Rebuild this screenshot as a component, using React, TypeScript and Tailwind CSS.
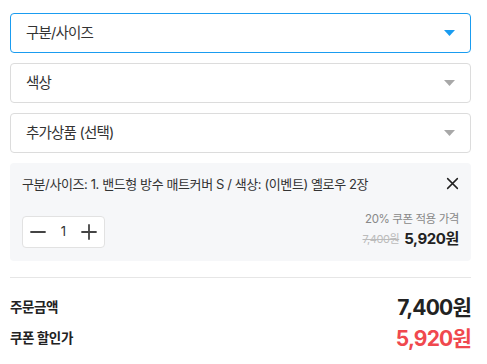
const selects = [
  { label: "구분/사이즈", active: true },
  { label: "색상", active: false },
  { label: "추가상품 (선택)", active: false },
];

function Caret({ active }: { active: boolean }) {
  return (
    <svg width="11" height="6" viewBox="0 0 11 6" className={active ? "fill-[#1a9cf0]" : "fill-[#a8a8a8]"}>
      <path d="M0 0h11L5.5 6z" />
    </svg>
  );
}

function Line({ d, size }: { d: string; size: number }) {
  return (
    <svg width={size} height={size} viewBox="0 0 16 16" fill="none" stroke="currentColor" strokeWidth="1.8" strokeLinecap="round">
      <path d={d} />
    </svg>
  );
}

export default function App() {
  return (
    <div className="w-[487px] bg-white pl-[10px] pr-[16px] pt-[13px] font-['Inter','Noto_Sans_CJK_KR',sans-serif] text-[#222]">
      <div className="flex flex-col gap-[10px]">
        {selects.map((s) => (
          <div
            key={s.label}
            className={
              "flex h-[40px] items-center justify-between rounded-[4px] border pl-[15px] pr-[15px] text-[14.5px] tracking-[-0.8px] " +
              (s.active ? "border-[#1a9cf0]" : "border-[#dcdcdc]")
            }
          >
            <span className="text-[#333]">{s.label}</span>
            <Caret active={s.active} />
          </div>
        ))}
      </div>

      <div className="mt-[10px] rounded-[4px] bg-[#f6f7f9] pb-[11px] pl-[12px] pr-[12px] pt-[9px]">
        <div className="flex items-start justify-between">
          <p className="text-[13px] leading-[24px] tracking-[-0.4px] text-[#333]">
            구분/사이즈: 1. 밴드형 방수 매트커버 S / 색상: (이벤트) 옐로우 2장
          </p>
          <div className="mt-[5px] text-[#222]">
            <Line d="M2 2L14 14M14 2L2 14" size={13} />
          </div>
        </div>
        <div className="mt-[14px] flex items-start justify-between">
          <div className="mt-[6px] flex h-[32px] w-[83px] items-center justify-between rounded-[4px] border border-[#e2e2e2] bg-white px-[7px] text-[#444]">
            <Line d="M1 8H15" size={16} />
            <span className="text-[13px] text-[#333]">1</span>
            <Line d="M1 8H15M8 1V15" size={16} />
          </div>
          <div className="flex flex-col items-end">
            <span className="text-[11.5px] leading-[18px] tracking-[-0.4px] text-[#888]">20% 쿠폰 적용 가격</span>
            <div className="flex h-[22px] items-center gap-[5px]">
              <span className="text-[11px] tracking-[-0.4px] text-[#bbb] line-through">7,400원</span>
              <span className="text-[15px] font-bold tracking-[-0.4px] text-[#222]">5,920원</span>
            </div>
          </div>
        </div>
      </div>

      <div className="mt-[16px] border-t border-[#e6e6e6] pt-[14px]">
        <div className="flex h-[31px] items-center justify-between">
          <span className="text-[13.5px] font-bold tracking-[-0.4px] text-[#222]">주문금액</span>
          <span className="text-[21px] font-bold tracking-[-0.8px] text-[#222]">7,400원</span>
        </div>
        <div className="flex h-[31px] items-center justify-between">
          <span className="text-[13.5px] font-bold tracking-[-0.4px] text-[#222]">쿠폰 할인가</span>
          <span className="text-[21px] font-bold tracking-[-0.8px] text-[#f0484e]">5,920원</span>
        </div>
      </div>
    </div>
  );
}
